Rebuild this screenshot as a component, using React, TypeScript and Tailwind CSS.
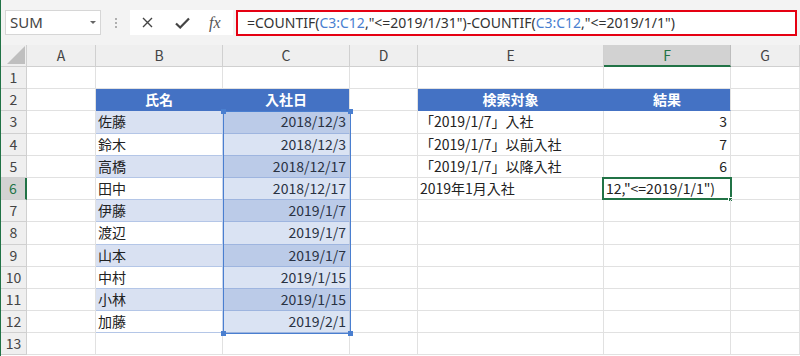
import React from 'react';

// column widths, written out so Tailwind picks them up
const COLS: { id: string; w: string }[] = [
  { id: 'A', w: 'w-[69px]' },
  { id: 'B', w: 'w-[127px]' },
  { id: 'C', w: 'w-[127px]' },
  { id: 'D', w: 'w-[68px]' },
  { id: 'E', w: 'w-[186px]' },
  { id: 'F', w: 'w-[127px]' },
  { id: 'G', w: 'w-[69px]' },
];

const PEOPLE = [
  ['佐藤', '2018/12/3'],
  ['鈴木', '2018/12/3'],
  ['高橋', '2018/12/17'],
  ['田中', '2018/12/17'],
  ['伊藤', '2019/1/7'],
  ['渡辺', '2019/1/7'],
  ['山本', '2019/1/7'],
  ['中村', '2019/1/15'],
  ['小林', '2019/1/15'],
  ['加藤', '2019/2/1'],
];

const SEARCH = [
  ['「2019/1/7」入社', '3'],
  ['「2019/1/7」以前入社', '7'],
  ['「2019/1/7」以降入社', '6'],
  ['2019年1月入社', ''],
];

const ROWS = Array.from({ length: 13 }, (_, i) => i + 1);

function cellOf(r: number, c: string): { text: string; cls: string } {
  // table header
  if (r === 2 && (c === 'B' || c === 'C' || c === 'E' || c === 'F')) {
    const text = { B: '氏名', C: '入社日', E: '検索対象', F: '結果' }[c] as string;
    const edge = c === 'B' || c === 'E' ? 'border-r-[#4472c4]' : '';
    return { text, cls: `bg-[#4472c4] text-white font-bold justify-center border-b-[#4472c4] ${edge}` };
  }
  // name / date table
  if (r >= 3 && r <= 12 && (c === 'B' || c === 'C')) {
    const [name, date] = PEOPLE[r - 3];
    const band = r % 2 === 1 ? 'bg-[#d9e1f2]' : 'bg-white';
    if (c === 'B') return { text: name, cls: `${band} pl-[2px] border-b-[#b4c6e7] border-r-[#c9d5ec]` };
    return { text: date, cls: `${band} justify-end pr-[3px] border-b-[#b4c6e7]` };
  }
  // active cell in edit mode
  if (r === 6 && c === 'F') return { text: '', cls: '' };
  // search table
  if (r >= 3 && r <= 6 && (c === 'E' || c === 'F')) {
    const [label, val] = SEARCH[r - 3];
    if (c === 'E') return { text: label, cls: 'pl-[2px]' };
    return { text: val, cls: 'justify-end pr-[3px]' };
  }
  return { text: '', cls: '' };
}

export default function App() {
  return (
    <div className="w-[800px] h-[356px] overflow-hidden bg-white border-l border-[#217346] font-['Noto_Sans_CJK_JP',sans-serif] text-[#222]">
      {/* FORMULA BAR */}
      <div className="h-[45px] bg-[#f3f3f3] flex items-center pl-[4px] pr-[3px]">
        <div className="w-[96px] h-[25px] bg-white border border-[#d6d6d6] flex items-center pl-[4px] pr-[4px] justify-between">
          <span className="text-[15px] text-[#444] font-['Noto_Sans',sans-serif] leading-none">SUM</span>
          <span className="w-0 h-0 border-l-[3px] border-r-[3px] border-t-[3px] border-l-transparent border-r-transparent border-t-[#666]" />
        </div>
        <div className="w-[29px] flex flex-col items-center gap-[2px]">
          <span className="w-[2px] h-[2px] bg-[#999] rounded-full" />
          <span className="w-[2px] h-[2px] bg-[#999] rounded-full" />
          <span className="w-[2px] h-[2px] bg-[#999] rounded-full" />
        </div>
        <div className="w-[103px] h-[25px] bg-white flex items-center">
          <svg className="ml-[12px]" width="11" height="11" viewBox="0 0 11 11">
            <path d="M1 1 L10 10 M10 1 L1 10" stroke="#444" strokeWidth="1.4" fill="none" />
          </svg>
          <svg className="ml-[22px]" width="15" height="12" viewBox="0 0 15 12">
            <path d="M1 6.5 L5.2 10.5 L14 1.5" stroke="#444" strokeWidth="2.2" fill="none" />
          </svg>
          <span className="ml-[19px] font-['Liberation_Serif',serif] italic text-[16px] text-[#555] leading-none">fx</span>
        </div>
        <div className="ml-[3px] flex-1 h-[26px] bg-white border-2 border-[#e50012] flex items-center pl-[9px] font-['Noto_Sans',sans-serif] text-[14px] text-[#333] whitespace-nowrap overflow-hidden">
          <span>=COUNTIF(</span>
          <span className="text-[#4a7fd0]">C3:C12</span>
          <span>,"&lt;=2019/1/31")-COUNTIF(</span>
          <span className="text-[#4a7fd0]">C3:C12</span>
          <span>,"&lt;=2019/1/1")</span>
        </div>
      </div>

      {/* COLUMN HEADERS */}
      <div className="flex h-[22px]">
        <div className="w-[26px] h-full shrink-0 bg-[#efefef] border-r border-b border-[#d0d0d0] relative">
          <svg className="absolute right-[1px] bottom-[2px]" width="18" height="18" viewBox="0 0 18 18">
            <path d="M18 0 L18 18 L0 18 Z" fill="#bfbfbf" />
          </svg>
        </div>
        {COLS.map(col => (
          <div
            key={col.id}
            className={`${col.w} h-full shrink-0 flex items-center justify-center text-[14px] border-r ${
              col.id === 'F'
                ? 'bg-[#d2d2d2] text-[#217346] border-r-[#bdbdbd] border-b-2 border-b-[#217346]'
                : 'bg-[#efefef] text-[#444] border-r-[#d0d0d0] border-b border-b-[#d0d0d0]'
            }`}
          >
            {col.id}
          </div>
        ))}
      </div>

      {/* GRID */}
      <div className="relative">
        {ROWS.map(r => (
          <div key={r} className="flex h-[22.2px]">
            <div
              className={`w-[26px] h-full shrink-0 flex items-center justify-center text-[14px] border-b border-[#d0d0d0] ${
                r === 6
                  ? 'bg-[#d2d2d2] text-[#217346] border-r-2 border-r-[#217346]'
                  : 'bg-[#efefef] text-[#444] border-r border-r-[#d0d0d0]'
              }`}
            >
              {r}
            </div>
            {COLS.map(col => {
              const { text, cls } = cellOf(r, col.id);
              const active = r === 6 && col.id === 'F';
              return (
                <div
                  key={col.id}
                  className={`${col.w} h-full shrink-0 relative flex items-center border-r border-b border-[#e1e1e1] text-[14px] whitespace-nowrap ${cls}`}
                >
                  {active ? (
                    <>
                      <span className="pl-[2px]">12,"&lt;=2019/1/1")</span>
                      <div className="absolute -left-[2px] -top-[1px] -right-[2px] -bottom-[1px] border-2 border-[#217346]" />
                      <div className="absolute -right-[3px] -bottom-[3px] w-[5px] h-[5px] bg-[#217346] border border-white" />
                    </>
                  ) : (
                    text
                  )}
                </div>
              );
            })}
          </div>
        ))}

        {/* formula reference range C3:C12 */}
        <div className="absolute left-[222px] top-[44px] w-[128px] h-[223px] border border-[#4a7fd0] bg-[#4472c4]/20 pointer-events-none">
          <span className="absolute -left-[3px] -top-[3px] w-[5px] h-[5px] bg-[#4a7fd0]" />
          <span className="absolute -right-[3px] -top-[3px] w-[5px] h-[5px] bg-[#4a7fd0]" />
          <span className="absolute -left-[3px] -bottom-[3px] w-[5px] h-[5px] bg-[#4a7fd0]" />
          <span className="absolute -right-[3px] -bottom-[3px] w-[5px] h-[5px] bg-[#4a7fd0]" />
        </div>
      </div>
    </div>
  );
}
